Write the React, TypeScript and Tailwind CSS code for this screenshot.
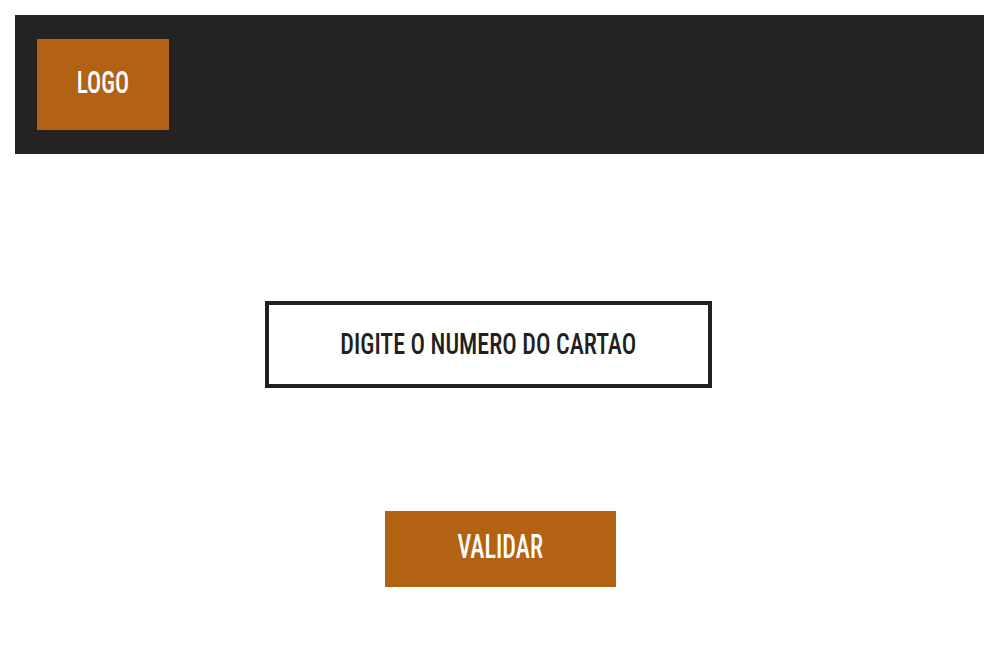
export default function App() {
  return (
    <div className="min-h-[650px] w-[1000px] bg-white font-['Roboto_Condensed','Roboto',sans-serif] font-medium">
      <header className="ml-[15px] mt-[15px] flex h-[139px] w-[969px] items-start bg-[#252223] pl-[22px] pt-[24px]">
        <div className="flex h-[91px] w-[132px] items-center justify-center bg-[#b36214] pb-[6px]">
          <span className="inline-block scale-x-[0.73] text-[32px] leading-none text-white">LOGO</span>
        </div>
      </header>
      <main className="flex flex-col">
        <div className="ml-[265px] mt-[147px] flex h-[87px] w-[447px] items-center justify-center border-4 border-[#231f20] pb-[1px]">
          <span className="inline-block scale-x-[0.83] whitespace-nowrap text-[29px] leading-none text-[#231f20]">
            DIGITE O NUMERO DO CARTAO
          </span>
        </div>
        <button className="ml-[385px] mt-[123px] flex h-[76px] w-[231px] items-center justify-center bg-[#b36214] pb-[6px]">
          <span className="inline-block scale-x-[0.71] text-[34px] leading-none text-white">VALIDAR</span>
        </button>
      </main>
    </div>
  );
}
